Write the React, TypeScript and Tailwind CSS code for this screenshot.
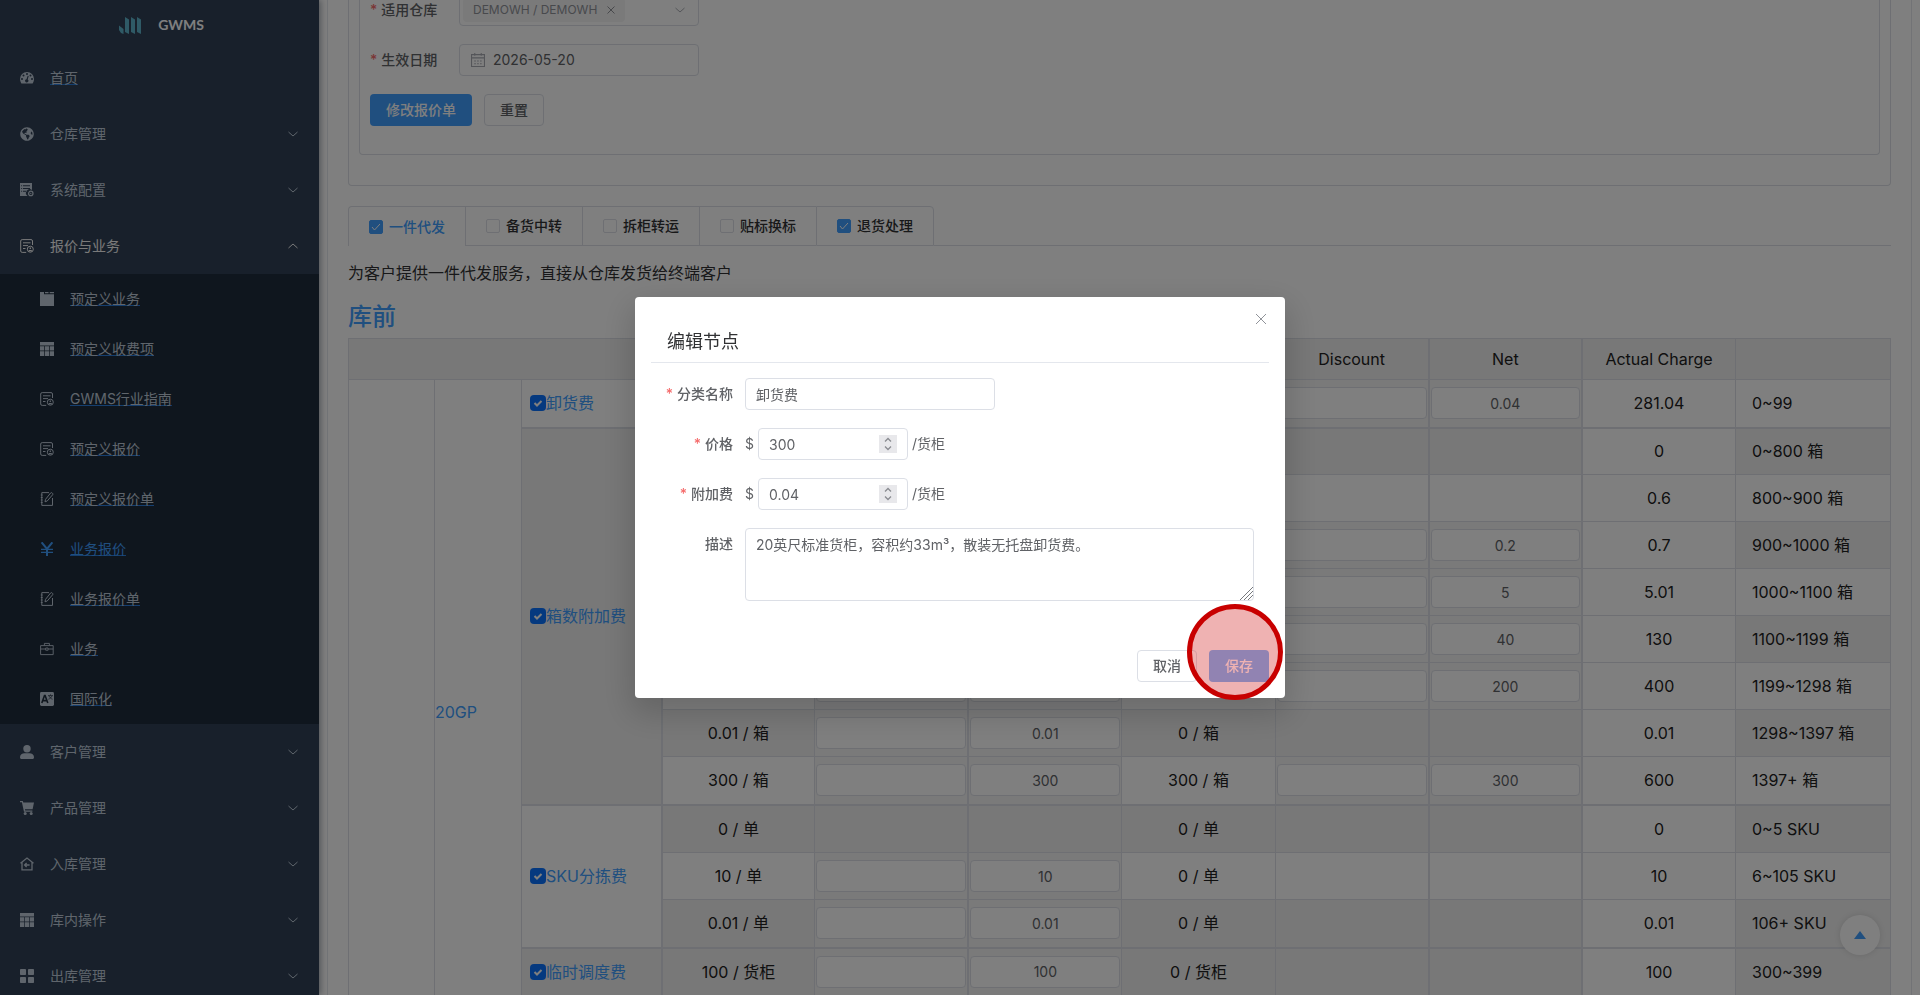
import type { ReactNode } from "react"
import { FaGlobeAmericas } from "react-icons/fa"

function Svg({ children, size = 14 }: { children: ReactNode; size?: number }) {
  return (
    <svg width={size} height={size} viewBox="0 0 14 14" fill="none" stroke="currentColor" className="shrink-0" aria-hidden="true">
      {children}
    </svg>
  )
}

const DashboardIcon = () => (
  <Svg>
    <path fill="currentColor" stroke="none" fillRule="evenodd" d="M7 1a7 7 0 0 1 7 7c0 1.600-.5 3-1.200 4.200-.2.300-.4.400-.8.400H2c-.4 0-.6-.1-.8-.4A7.800 7.800 0 0 1 0 8a7 7 0 0 1 7-7Zm0 1a1 1 0 1 0 0 2 1 1 0 0 0 0-2ZM3.500 3.500a1 1 0 1 0 0 2 1 1 0 0 0 0-2Zm7 0a1 1 0 1 0 0 2 1 1 0 0 0 0-2ZM2 7a1 1 0 1 0 0 2 1 1 0 0 0 0-2Zm10 0a1 1 0 1 0 0 2 1 1 0 0 0 0-2ZM7.700 4.800 6.500 8.200a1.600 1.600 0 1 0 1.200.3l1-3.400-1-.3Z" />
  </Svg>
)

const ListGearIcon = () => (
  <Svg>
    <path fill="currentColor" stroke="none" fillRule="evenodd" d="M0 0h12v7a3.600 3.600 0 0 0-4.500 6H0V0Zm3 2.200v1h7v-1H3Zm0 2.800v1h7V5H3Zm0 2.800v1h4v-1H3ZM1.200 2.200v1h.9v-1h-.9Zm0 2.800v1h.9V5h-.9Zm0 2.800v1h.9v-1h-.9Z" />
    <circle cx="10.800" cy="10.400" r="2.200" strokeWidth="1.200" />
    <circle cx="10.800" cy="10.400" r="0.600" fill="currentColor" stroke="none" />
  </Svg>
)

const QuoteIcon = () => (
  <Svg>
    <path d="M12.500 6V2A1.500 1.500 0 0 0 11 .6H2.200A1.500 1.500 0 0 0 .7 2v10a1.500 1.500 0 0 0 1.500 1.400h4" />
    <path d="M3 3.800h7.500M3 6.600h5M3 9.500h2.500" />
    <circle cx="10.300" cy="10.200" r="3" />
    <path d="M10.300 8.600v1.500M8.800 11.600h3" strokeWidth="1.300" />
  </Svg>
)

const CalendarIcon = () => (
  <Svg>
    <path fill="currentColor" stroke="none" d="M0 0h4v2.300h10V14H0V0Zm5 0h3.500v1.200H5V0Zm4.700 0H14v1.200H9.700V0Z" />
  </Svg>
)

const TableIcon = () => (
  <Svg>
    <path fill="currentColor" stroke="none" d="M0 0h14v3.400H0V0Zm0 4.200h4.200v4.400H0V4.200Zm4.900 0h4.200v4.400H4.900V4.200Zm4.900 0H14v4.400H9.800V4.200ZM0 9.300h4.200V14H0V9.300Zm4.900 0h4.200V14H4.900V9.300Zm4.900 0H14V14H9.800V9.300Z" />
  </Svg>
)

const NoteIcon = () => (
  <Svg>
    <path d="M9 .6H1.800v12.800h10.700V6" />
    <path d="M.8 3h1.800M.8 5.500h1.800M.8 8h1.800M.8 10.500h1.800" />
    <path d="m5 9.800.5-2.400L10.600 1a1 1 0 0 1 1.500-.1l.5.5a1 1 0 0 1 0 1.400L7.200 9 5 9.800Z" />
  </Svg>
)

const YenIcon = () => (
  <Svg>
    <path d="M1.600.3 7 7 12.400.3M7 6.500V14" strokeWidth="2" />
    <path d="M1 7.400h12M1 10.400h12" strokeWidth="1.300" />
  </Svg>
)

const BriefcaseIcon = () => (
  <Svg>
    <path d="M.6 3.600h12.600v9H.6zM4.400 3.400V1.400h5v2M.6 7h5M8.200 7h5M5.700 6h2.400v2.200H5.700z" strokeWidth="0.900" />
  </Svg>
)

const LanguageIcon = () => (
  <Svg>
    <rect width="14" height="14" rx="1.400" fill="currentColor" stroke="none" />
    <path d="m1.800 11 2.700-7.400h.6L7.800 11M2.900 8.600h3.800" stroke="#1f2d3d" strokeWidth="1.600" />
    <path d="M8 3.600h5M10.500 2.400v1.200M9 3.800c.5 1.600 2 3 3.600 3.400M12 3.800c-.5 1.600-2 3-3.600 3.400" stroke="#1f2d3d" strokeWidth="0.700" />
  </Svg>
)

const UserIcon = () => (
  <Svg>
    <g fill="currentColor" stroke="none">
      <circle cx="7" cy="3.700" r="3.700" />
      <path d="M0 12.200C0 9.600 2.200 8.300 4.500 8.300h5c2.300 0 4.500 1.300 4.500 3.900 0 1.200-.6 1.800-1.600 1.800H1.600C.6 14 0 13.400 0 12.200Z" />
    </g>
  </Svg>
)

const CartIcon = () => (
  <Svg>
    <path fill="currentColor" stroke="none" d="M0 0h2.800l.5 1.600H14l-1.400 6.600H4.900l.3 1.300h7.200v1.300H4L1.900 1.300H0V0Z" />
    <circle cx="5.200" cy="12.500" r="1.500" fill="currentColor" stroke="none" />
    <circle cx="11.200" cy="12.500" r="1.500" fill="currentColor" stroke="none" />
  </Svg>
)

const HomeInIcon = () => (
  <Svg>
    <path d="M.5 6.300 7 1l6.500 5.300M2 5.500v7.400h10V5.500" strokeWidth="1.300" />
    <path d="M4.600 8h5M6.600 6 4.600 8l2 2" strokeWidth="1.300" />
  </Svg>
)

const GridIcon = () => (
  <Svg>
    <g fill="currentColor" stroke="none">
      <rect width="6" height="6" rx="0.800" />
      <rect x="8" width="6" height="6" rx="0.800" />
      <rect y="8" width="6" height="6" rx="0.800" />
      <rect x="8" y="8" width="6" height="6" rx="0.800" />
    </g>
  </Svg>
)

function Chevron({ up }: { up?: boolean }) {
  return (
    <svg width="12" height="12" viewBox="0 0 12 12" fill="none" stroke="currentColor" aria-hidden="true">
      <path d={up ? "m1.500 8 4.500-4 4.500 4" : "m1.500 4 4.500 4 4.500-4"} />
    </svg>
  )
}

const topItems = [
  { label: "仓库管理", icon: <FaGlobeAmericas size={14} /> },
  { label: "系统配置", icon: <ListGearIcon /> },
  { label: "报价与业务", icon: <QuoteIcon />, open: true },
]

const subItems = [
  { label: "预定义业务", icon: <CalendarIcon /> },
  { label: "预定义收费项", icon: <TableIcon /> },
  { label: "GWMS行业指南", icon: <QuoteIcon /> },
  { label: "预定义报价", icon: <QuoteIcon /> },
  { label: "预定义报价单", icon: <NoteIcon /> },
  { label: "业务报价", icon: <YenIcon />, active: true },
  { label: "业务报价单", icon: <NoteIcon /> },
  { label: "业务", icon: <BriefcaseIcon /> },
  { label: "国际化", icon: <LanguageIcon /> },
]

const bottomItems = [
  { label: "客户管理", icon: <UserIcon /> },
  { label: "产品管理", icon: <CartIcon /> },
  { label: "入库管理", icon: <HomeInIcon /> },
  { label: "库内操作", icon: <TableIcon /> },
  { label: "出库管理", icon: <GridIcon /> },
]

function MenuButton({ label, icon, open }: { label: string; icon: ReactNode; open?: boolean }) {
  return (
    <button
      type="button"
      aria-expanded={!!open}
      className={`flex h-14 w-full shrink-0 items-center gap-4 px-5 text-sm ${open ? "text-[#f4f4f5]" : "text-[#bfcbd9]"}`}
    >
      {icon}
      <span className="flex-1 text-left">{label}</span>
      <Chevron up={open} />
    </button>
  )
}

function Sidebar() {
  return (
    <aside className="z-10 flex w-[319px] shrink-0 flex-col overflow-hidden bg-[#304156] shadow-[2px_0_6px_rgba(0,21,41,0.35)]">
      <div className="flex h-[50px] shrink-0 items-center justify-center gap-4 pl-1">
        <svg width="23" height="17" viewBox="0 0 23 17" aria-hidden="true">
          <path fill="#5fb4cc" d="M0 8.500 4.500 12v5L2 16 0 13V8.500ZM6 0l4 2.500V17l-4-2V0ZM12 0l4 2.500V17l-4-2V0ZM18 0l4 2.500V17l-4-2V0Z" />
        </svg>
        <h1 className="font-['Lato',sans-serif] text-sm font-bold text-white">GWMS</h1>
      </div>
      <nav className="flex flex-col">
        <a href="#home" className="flex h-14 items-center gap-4 px-5 text-sm text-[#bfcbd9]">
          <DashboardIcon />
          <span className="underline decoration-[#2a7fe0]">首页</span>
        </a>
        {topItems.map((item) => (
          <MenuButton key={item.label} {...item} />
        ))}
        <div className="bg-[#1f2d3d]">
          {subItems.map((item) => (
            <a
              key={item.label}
              href="#menu"
              className={`flex h-[50px] items-center gap-4 pl-10 text-sm ${item.active ? "text-[#409eff]" : "text-[#bfcbd9]"}`}
            >
              {item.icon}
              <span className="underline decoration-[#2a7fe0]">{item.label}</span>
            </a>
          ))}
        </div>
        {bottomItems.map((item) => (
          <MenuButton key={item.label} {...item} />
        ))}
      </nav>
    </aside>
  )
}

function QuoteForm() {
  return (
    <div className="rounded-b border border-t-0 border-[#dcdfe6] px-[10px] pb-[30px]">
      <form className="rounded-b border border-t-0 border-[#dcdfe6] px-[10px] pb-7 text-sm text-[#606266]">
        <div className="-mt-[6px] flex items-center">
          <label htmlFor="warehouse" className="w-[89px] font-medium">
            <span className="mr-1 text-[#f56c6c]">*</span>适用仓库
          </label>
          <button
            id="warehouse"
            type="button"
            className="flex h-8 w-[240px] items-center justify-between rounded border border-[#dcdfe6] bg-white pl-[3px] pr-3 text-[#a8abb2]"
          >
            <span className="flex h-6 items-center gap-[10px] rounded bg-[#f4f4f5] px-[10px] text-xs text-[#909399]">
              DEMOWH / DEMOWH
              <svg width="8" height="8" viewBox="0 0 8 8" stroke="currentColor" aria-hidden="true">
                <path d="m.5.5 7 7m0-7-7 7" />
              </svg>
            </span>
            <Chevron />
          </button>
        </div>
        <div className="mt-[18px] flex items-center">
          <label htmlFor="date" className="w-[89px] font-medium">
            <span className="mr-1 text-[#f56c6c]">*</span>生效日期
          </label>
          <div className="flex h-8 w-[240px] items-center gap-2 rounded border border-[#dcdfe6] px-[11px]">
            <svg width="14" height="14" viewBox="0 0 13 13" fill="none" stroke="#a8abb2" className="shrink-0" aria-hidden="true">
              <path d="M.5 1.500h12v11H.5zM.5 4.500h12M3.500 0v2.500M9.500 0v2.500" />
              <path d="M3 7.500h7M3 10h7" strokeDasharray="1.500 1.200" />
            </svg>
            <input id="date" defaultValue="2026-05-20" className="w-full text-[#606266] outline-none" />
          </div>
        </div>
        <div className="mt-[18px] flex gap-3">
          <button type="button" className="h-8 rounded bg-[#409eff] px-4 font-medium text-white">修改报价单</button>
          <button type="button" className="h-8 rounded border border-[#dcdfe6] px-[15px] font-medium">重置</button>
        </div>
      </form>
    </div>
  )
}

const tabs = [
  { label: "一件代发", checked: true, active: true },
  { label: "备货中转" },
  { label: "拆柜转运" },
  { label: "贴标换标" },
  { label: "退货处理", checked: true },
]

function Tabs() {
  return (
    <div className="mt-5 flex h-10">
      {tabs.map((tab, i) => (
        <label
          key={tab.label}
          className={`flex items-center gap-[6px] border-l border-t border-[#dcdfe6] px-5 text-sm font-medium ${tab.active ? "rounded-tl text-[#409eff]" : "border-b text-[#303133]"} ${i === tabs.length - 1 ? "rounded-tr border-r" : ""}`}
        >
          <span className="grid size-[14px] place-items-center">
            <input
              type="checkbox"
              defaultChecked={tab.checked}
              className="col-start-1 row-start-1 size-[14px] appearance-none rounded-xs border border-[#dcdfe6] bg-white checked:border-[#409eff] checked:bg-[#409eff]"
            />
            {tab.checked && (
              <svg className="pointer-events-none col-start-1 row-start-1" width="10" height="10" viewBox="0 0 10 10" fill="none" stroke="white" aria-hidden="true">
                <path d="m1 5 2.500 3L9 2" />
              </svg>
            )}
          </span>
          {tab.label}
        </label>
      ))}
      <div className="flex-1 border-b border-[#dcdfe6]" />
    </div>
  )
}

// null in a discount/net pair means the tier is not editable
type Row = {
  price: string
  left: string | null
  base: string
  right: string | null
  actual: string
  range: string
}

type Group = { name: string; rows: Row[] }

const groups: Group[] = [
  {
    name: "卸货费",
    rows: [{ price: "", left: "", base: "", right: "0.04", actual: "281.04", range: "0~99" }],
  },
  {
    name: "箱数附加费",
    rows: [
      { price: "", left: null, base: "", right: null, actual: "0", range: "0~800 箱" },
      { price: "", left: "", base: "", right: null, actual: "0.6", range: "800~900 箱" },
      { price: "", left: "", base: "", right: "0.2", actual: "0.7", range: "900~1000 箱" },
      { price: "", left: "", base: "", right: "5", actual: "5.01", range: "1000~1100 箱" },
      { price: "", left: "", base: "", right: "40", actual: "130", range: "1100~1199 箱" },
      { price: "", left: "", base: "", right: "200", actual: "400", range: "1199~1298 箱" },
      { price: "0.01 / 箱", left: "0.01", base: "0 / 箱", right: null, actual: "0.01", range: "1298~1397 箱" },
      { price: "300 / 箱", left: "300", base: "300 / 箱", right: "300", actual: "600", range: "1397+ 箱" },
    ],
  },
  {
    name: "SKU分拣费",
    rows: [
      { price: "0 / 单", left: null, base: "0 / 单", right: null, actual: "0", range: "0~5 SKU" },
      { price: "10 / 单", left: "10", base: "0 / 单", right: null, actual: "10", range: "6~105 SKU" },
      { price: "0.01 / 单", left: "0.01", base: "0 / 单", right: null, actual: "0.01", range: "106+ SKU" },
    ],
  },
  {
    name: "临时调度费",
    rows: [{ price: "100 / 货柜", left: "100", base: "0 / 货柜", right: null, actual: "100", range: "300~399" }],
  },
]

const rowCount = groups.reduce((n, g) => n + g.rows.length, 0)
const cell = "border border-[#dcdfe6] p-0"

function FeeInput({ value, label }: { value: string; label: string }) {
  return (
    <input
      aria-label={label}
      defaultValue={value}
      className="mx-auto block h-8 w-[calc(100%-2px)] rounded border border-[#dcdfe6] bg-white text-center text-sm text-[#606266]"
    />
  )
}

function EditCells({ value, name }: { value: string | null; name: string }) {
  const bg = value === null ? "" : "bg-[#f4f4f5]"
  return (
    <>
      <td className={`${cell} ${bg}`}>{value !== null && <FeeInput value="" label={`${name} Discount`} />}</td>
      <td className={`${cell} border-l-2 ${bg}`}>{value !== null && <FeeInput value={value} label={`${name} Net`} />}</td>
    </>
  )
}

function FeeTable() {
  return (
    <table className="mt-[5px] w-full table-fixed border-collapse text-center text-base text-[#212121]">
      <colgroup>
        <col className="w-[86px]" />
        <col className="w-[87px]" />
        <col className="w-[140px]" />
        <col span={7} />
        <col className="w-[155px]" />
      </colgroup>
      <thead>
        <tr className="h-[41px] bg-[#f0f0f0]">
          <th colSpan={7} className={cell} />
          <th className={`${cell} font-normal`}>Discount</th>
          <th className={`${cell} border-l-2 font-normal`}>Net</th>
          <th className={`${cell} border-l-2 font-normal`}>Actual Charge</th>
          <th className={cell} />
        </tr>
      </thead>
      <tbody>
        {groups.map((group, g) =>
          group.rows.map((row, r) => {
            const striped = g === 3 || (g > 0 && r % 2 === 0)
            const last = r === group.rows.length - 1
            return (
              <tr
                key={row.range}
                className={`${striped ? "bg-[#f0f0f0]" : "bg-white"} ${last || (r === 0 && g !== 1) ? "h-12" : "h-[47px]"} ${r === 0 && g > 0 ? "border-t-2 border-[#dcdfe6]" : ""}`}
              >
                {g === 0 && r === 0 && (
                  <>
                    <td rowSpan={rowCount + 1} className={`${cell} bg-white`} />
                    <td rowSpan={rowCount + 1} className={`${cell} bg-white text-left text-[#409eff]`}>20GP</td>
                  </>
                )}
                {r === 0 && (
                  <td rowSpan={group.rows.length} className={`${cell} pl-2 ${g % 2 ? "bg-[#f0f0f0]" : "bg-white"}`}>
                    <label className="flex items-center whitespace-nowrap text-[#409eff]">
                      <span className="grid size-4 shrink-0 place-items-center">
                        <input type="checkbox" defaultChecked className="col-start-1 row-start-1 size-4 appearance-none rounded bg-[#0a73ff]" />
                        <svg className="pointer-events-none col-start-1 row-start-1" width="10" height="10" viewBox="0 0 10 10" fill="none" stroke="white" strokeWidth="2" aria-hidden="true">
                          <path d="m1.500 5 2.500 2.500L8.500 3" />
                        </svg>
                      </span>
                      {group.name}
                    </label>
                  </td>
                )}
                <td className={`${cell} border-l-2`}>{row.price}</td>
                <EditCells value={row.left} name={row.range} />
                <td className={cell}>{row.base}</td>
                <EditCells value={row.right} name={row.range} />
                <td className={`${cell} border-l-2 bg-white`}>{row.actual}</td>
                <td className={`${cell} pl-4 text-left`}>{row.range}</td>
              </tr>
            )
          }),
        )}
        <tr className="h-12">
          <td colSpan={9} className={cell} />
        </tr>
      </tbody>
    </table>
  )
}

function DialogLabel({ htmlFor, required, children }: { htmlFor: string; required?: boolean; children: ReactNode }) {
  return (
    <label htmlFor={htmlFor} className="w-[94px] shrink-0 pr-3 text-right font-medium leading-8">
      {required && <span className="mr-1 text-[#f56c6c]">*</span>}
      {children}
    </label>
  )
}

function MoneyRow({ id, label, value }: { id: string; label: string; value: string }) {
  return (
    <div className="flex items-center">
      <DialogLabel htmlFor={id} required>{label}</DialogLabel>
      <span>$</span>
      <div className="relative mx-1 w-[150px]">
        <input
          id={id}
          type="number"
          defaultValue={value}
          className="h-8 w-full rounded border border-[#dcdfe6] px-[10px] [appearance:textfield]"
        />
        <span className="pointer-events-none absolute right-[11px] top-[7px] grid h-[18px] w-[18px] place-items-center bg-[#e8e8eb]">
          <svg width="10" height="14" viewBox="0 0 10 14" fill="none" stroke="#8a8c91" strokeWidth="1.300" aria-hidden="true">
            <path d="m2 4.500 3-3 3 3M2 9.500l3 3 3-3" />
          </svg>
        </span>
      </div>
      <span>/货柜</span>
    </div>
  )
}

function EditDialog() {
  return (
    <div className="fixed inset-0 z-20 flex items-center justify-center bg-black/50">
      <div
        role="dialog"
        aria-labelledby="dialog-title"
        className="relative w-[650px] rounded bg-white p-4 text-sm text-[#606266] shadow-[0_12px_32px_4px_rgba(0,0,0,0.16)]"
      >
        <button type="button" aria-label="Close" className="absolute right-[18px] top-[16px] grid size-3 place-items-center text-[#909399]">
          <svg width="12" height="12" viewBox="0 0 12 12" stroke="currentColor" aria-hidden="true">
            <path d="m1 1 10 10m0-10L1 11" />
          </svg>
        </button>
        <header className="border-b border-[#e4e7ed] px-4 pb-2 pt-[17px]">
          <h2 id="dialog-title" className="text-lg leading-6 text-[#303133]">编辑节点</h2>
        </header>
        <form className="flex flex-col gap-[18px] pr-[15px] pt-[15px]">
          <div className="flex items-center">
            <DialogLabel htmlFor="name" required>分类名称</DialogLabel>
            <input id="name" defaultValue="卸货费" className="h-8 w-[250px] rounded border border-[#dcdfe6] px-[10px]" />
          </div>
          <MoneyRow id="price" label="价格" value="300" />
          <MoneyRow id="surcharge" label="附加费" value="0.04" />
          <div className="flex items-start">
            <DialogLabel htmlFor="desc">描述</DialogLabel>
            <div className="relative flex-1">
              <textarea
                id="desc"
                defaultValue="20英尺标准货柜，容积约33m³，散装无托盘卸货费。"
                className="block h-[73px] w-full resize-none rounded border border-[#dcdfe6] px-[10px] py-[5px] leading-[21px]"
              />
              <svg className="pointer-events-none absolute bottom-px right-px" width="13" height="13" viewBox="0 0 13 13" stroke="#77797d" aria-hidden="true">
                <path d="M0 13 13 0M4 13l9-9M8 13l5-5" />
              </svg>
            </div>
          </div>
        </form>
        <footer className="mt-[49px] flex justify-end gap-3">
          <button type="button" className="h-8 w-[60px] rounded border border-[#dcdfe6] font-medium">取消</button>
          <button type="button" className="h-8 w-[60px] rounded bg-[#79bbff] font-medium text-white">保存</button>
        </footer>
        <div className="pointer-events-none absolute -bottom-[2px] right-[2px] size-24 rounded-full border-[5px] border-[#c80000] bg-[#cc0000]/30" />
      </div>
    </div>
  )
}

export default function App() {
  return (
    <div className="flex h-screen overflow-hidden bg-white font-['Inter','Noto_Sans_CJK_SC',sans-serif]">
      <Sidebar />
      <main className="min-w-0 flex-1 px-2">
        <div className="min-h-screen border-x border-[#e4e7ed] px-5">
          <QuoteForm />
          <Tabs />
          <p className="mt-[15px] text-base text-[#303133]">为客户提供一件代发服务，直接从仓库发货给终端客户</p>
          <h2 className="mt-4 text-2xl font-medium text-[#409eff]">库前</h2>
          <FeeTable />
        </div>
      </main>
      <button
        type="button"
        aria-label="Back to top"
        className="fixed bottom-10 right-10 z-10 grid size-10 place-items-center rounded-full bg-white text-[#409eff] shadow-[0_0_6px_rgba(0,0,0,0.12)]"
      >
        <svg width="12" height="8" viewBox="0 0 12 8" fill="currentColor" aria-hidden="true">
          <path d="M6 0 12 8H0Z" />
        </svg>
      </button>
      <EditDialog />
    </div>
  )
}
